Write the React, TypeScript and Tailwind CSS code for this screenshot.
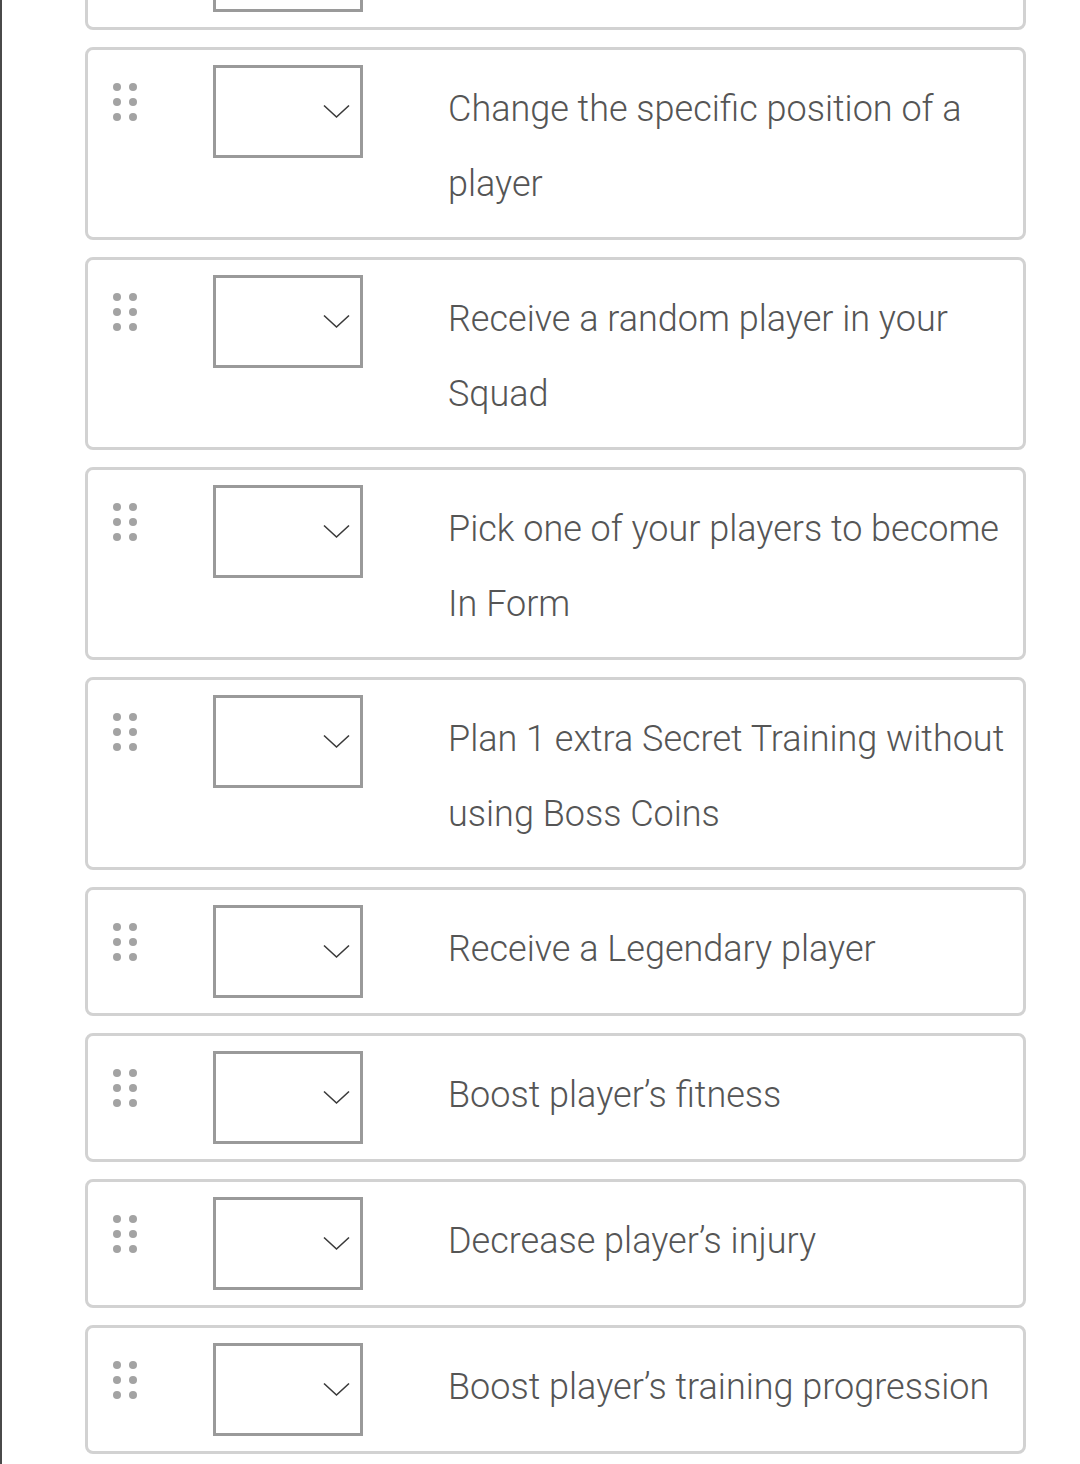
import React from "react";

const items: string[][] = [
  [],
  ["Change the specific position of a", "player"],
  ["Receive a random player in your", "Squad"],
  ["Pick one of your players to become", "In Form"],
  ["Plan 1 extra Secret Training without", "using Boss Coins"],
  ["Receive a Legendary player"],
  ["Boost player\u2019s fitness"],
  ["Decrease player\u2019s injury"],
  ["Boost player\u2019s training progression"],
];

function Dots() {
  return (
    <div className="ml-[10px] mt-[18px] grid grid-cols-2 gap-x-[8px] gap-y-[7px] shrink-0">
      {Array.from({ length: 6 }).map((_, i) => (
        <div key={i} className="w-[8px] h-[8px] rounded-full bg-[#a3a3a3]" />
      ))}
    </div>
  );
}

function SelectBox() {
  return (
    <div className="ml-[76px] w-[150px] h-[93px] border-[3px] border-[#9a9a9a] bg-white shrink-0 flex items-start justify-end">
      <svg
        className="mt-[36px] mr-[10px]"
        width="27"
        height="15"
        viewBox="0 0 27 15"
        fill="none"
      >
        <path d="M1 1.5 L13.5 13 L26 1.5" stroke="#3a3a3a" strokeWidth="1.6" />
      </svg>
    </div>
  );
}

export default function App() {
  return (
    <div
      className="h-[1464px] overflow-hidden bg-white border-l-2 border-[#4a4a4a]"
      style={{ fontFamily: "Roboto, 'Liberation Sans', sans-serif" }}
    >
      <div className="mt-[-99px] pl-[83px] pr-[54px] flex flex-col gap-[17px]">
        {items.map((lines, idx) => (
          <div
            key={idx}
            className="border-[3px] border-[#d2d2d2] rounded-[8px] p-[15px] flex items-start bg-white"
          >
            <Dots />
            <SelectBox />
            <div className="ml-[85px] mt-[7px] text-[36px] leading-[75px] font-light text-[#555555] whitespace-nowrap">
              {lines.map((l, i) => (
                <div key={i}>{l}</div>
              ))}
            </div>
          </div>
        ))}
      </div>
    </div>
  );
}
